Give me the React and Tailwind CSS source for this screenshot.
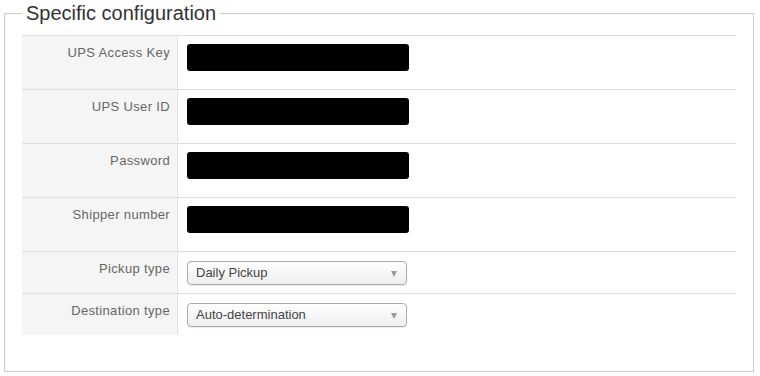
const rows = [
  { label: 'UPS Access Key', kind: 'secret' },
  { label: 'UPS User ID', kind: 'secret' },
  { label: 'Password', kind: 'secret' },
  { label: 'Shipper number', kind: 'secret' },
  { label: 'Pickup type', kind: 'select', value: 'Daily Pickup' },
  { label: 'Destination type', kind: 'select', value: 'Auto-determination' },
]

const FakeSelect = ({ value }) => (
  <div className="relative w-[220px] h-[24px] rounded-[4px] border border-[#aaa] bg-gradient-to-b from-white to-[#eeeeee] shadow-[0_1px_1px_rgba(0,0,0,0.08)] flex items-center pl-[8px] text-[13px] text-[#444]">
    {value}
    <span className="absolute right-[9px] top-[9px] w-0 h-0 border-l-[3px] border-r-[3px] border-t-[6px] border-l-transparent border-r-transparent border-t-[#999]"></span>
  </div>
)

export default function App() {
  return (
    <div className="w-[760px] h-[376px] bg-white font-['Liberation_Sans',Arial,sans-serif] pl-[4px]">
      <fieldset className="w-[750px] h-[372px] border border-[#ccc] px-[17px] pt-[9px]">
        <legend className="px-[4px] text-[20px] leading-[26px] text-[#333]">
          Specific configuration
        </legend>

        <div className="w-[714px]">
          {rows.map((row) => (
            <div
              key={row.label}
              className={`flex border-t border-[#ddd] ${row.kind === 'secret' ? 'h-[54px]' : 'h-[42px]'}`}
            >
              <div className="w-[156px] shrink-0 bg-[#f5f5f5] border-r border-[#e3e3e3] text-right pr-[7px] pt-[8px] text-[13px] leading-[18px] tracking-[0.35px] text-[#666]">
                {row.label}
              </div>
              <div className={`pl-[9px] ${row.kind === 'secret' ? 'pt-[8px]' : 'pt-[9px]'}`}>
                {row.kind === 'secret' ? (
                  <div className="w-[222px] h-[27px] bg-black rounded-[3px]"></div>
                ) : (
                  <FakeSelect value={row.value} />
                )}
              </div>
            </div>
          ))}
        </div>
      </fieldset>
    </div>
  )
}
